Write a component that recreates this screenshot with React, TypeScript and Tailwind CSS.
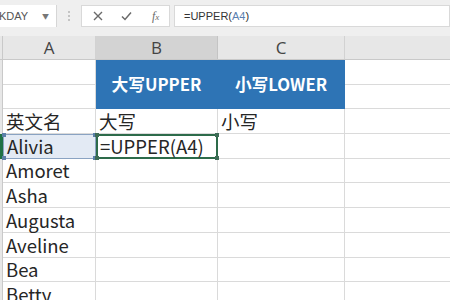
import React from 'react';

const font = { fontFamily: '"Noto Sans CJK SC", "Noto Sans", sans-serif' };

const names = ['Amoret', 'Asha', 'Augusta', 'Aveline', 'Bea', 'Betty'];

const Handle: React.FC<{ className: string; color: string }> = ({ className, color }) => (
  <span className={`absolute w-[4px] h-[4px] ${className}`} style={{ backgroundColor: color }} />
);

const App: React.FC = () => {
  return (
    <div className="w-[450px] h-[300px] overflow-hidden bg-white" style={font}>
      {/* Formula bar */}
      <div className="h-[36px] bg-[#efefef] pt-[5px] flex items-start">
        <div className="w-[57px] h-[22px] bg-white border-r border-[#d6d6d6] flex items-center justify-between pl-0 pr-[7px]">
          <span className="text-[11px] text-[#555] -ml-[1px]" style={{ fontFamily: '"Liberation Sans", sans-serif' }}>
            KDAY
          </span>
          <span className="text-[7px] text-[#777]">▼</span>
        </div>
        <div className="w-[24px] h-[22px] flex flex-col items-center justify-center gap-[2px]">
          <span className="w-[2px] h-[2px] bg-[#c4c4c4]" />
          <span className="w-[2px] h-[2px] bg-[#c4c4c4]" />
          <span className="w-[2px] h-[2px] bg-[#c4c4c4]" />
        </div>
        <div className="w-[89px] h-[22px] bg-white border border-[#d9d9d9] flex items-center text-[#6a6a6a]">
          <svg className="ml-[11px]" width="10" height="10" viewBox="0 0 10 10" fill="none" stroke="currentColor" strokeWidth="1.4">
            <path d="M1 1 9 9M9 1 1 9" />
          </svg>
          <svg className="ml-[18px]" width="11" height="10" viewBox="0 0 11 10" fill="none" stroke="currentColor" strokeWidth="1.5">
            <path d="M1 5.5 4 8.5 10 1.5" />
          </svg>
          <span className="ml-[20px] text-[12px] italic" style={{ fontFamily: '"Liberation Serif", serif' }}>
            f<span className="text-[9px]">x</span>
          </span>
        </div>
        <div className="ml-[4px] flex-1 h-[22px] bg-white border border-[#d9d9d9] flex items-center pl-[9px]">
          <span className="text-[11px] text-[#333]" style={{ fontFamily: '"Liberation Sans", sans-serif' }}>
            =UPPER(<span className="text-[#5a7fb0]">A4</span>)
          </span>
        </div>
      </div>

      {/* Column headers */}
      <div className="flex h-[24px] bg-[#e7e7e7] border-b border-[#c9c9c9] text-[17px] text-[#444]" style={{ fontFamily: '"Open Sans", sans-serif' }}>
        <div className="w-[3px] border-r border-[#c9c9c9]" />
        <div className="w-[93px] border-r border-[#d2d2d2] flex items-center justify-center">A</div>
        <div className="w-[122px] bg-[#d3d3d3] border-r border-[#c4c4c4] flex items-center justify-center">B</div>
        <div className="w-[127px] border-r border-[#d2d2d2] flex items-center justify-center">C</div>
        <div className="flex-1" />
      </div>

      {/* Grid */}
      <div className="grid grid-cols-[3px_93px_122px_127px_1fr] auto-rows-[24.7px] text-[18.5px] text-[#262626]">
        {/* rows 1-2 */}
        <div className="row-span-2 bg-[#e7e7e7] border-r border-[#c9c9c9]" />
        <div className="border-r border-b border-[#dadada]" />
        <div className="row-span-2 bg-[#2e74b5] border-r border-b border-[#2e74b5] flex items-center justify-center text-white font-bold text-[16.7px]">
          大写UPPER
        </div>
        <div className="row-span-2 bg-[#2e74b5] border-r border-b border-[#2e74b5] flex items-center justify-center text-white font-bold text-[16.7px]">
          小写LOWER
        </div>
        <div className="border-b border-[#dadada]" />
        <div className="border-r border-b border-[#dadada]" />
        <div className="border-b border-[#dadada]" />

        {/* row 3 */}
        <div className="bg-[#e7e7e7] border-r border-[#c9c9c9]" />
        <div className="border-r border-b border-[#dadada] flex items-end pl-[3px] leading-[23px]">英文名</div>
        <div className="border-r border-b border-[#dadada] flex items-end pl-[3px] leading-[23px]">大写</div>
        <div className="border-r border-b border-[#dadada] flex items-end pl-[3px] leading-[23px]">小写</div>
        <div className="border-b border-[#dadada]" />

        {/* row 4 */}
        <div className="bg-[#1e7145]" />
        <div className="relative bg-[#e3eaf4] border border-[#8aa3c2] flex items-end pl-[3px] leading-[23px]">
          Alivia
          <Handle className="-left-[2px] -top-[2px]" color="#5b7fa8" />
          <Handle className="-right-[2px] -top-[2px]" color="#5b7fa8" />
          <Handle className="-left-[2px] -bottom-[2px]" color="#5b7fa8" />
          <Handle className="-right-[2px] -bottom-[2px]" color="#5b7fa8" />
        </div>
        <div className="relative border-2 border-[#2d6b4a] flex items-end pl-[2px] leading-[22px]">
          =UPPER(A4)
          <Handle className="-left-[3px] -top-[3px]" color="#3e6b56" />
          <Handle className="-right-[3px] -top-[3px]" color="#3e6b56" />
          <Handle className="-left-[3px] -bottom-[3px]" color="#3e6b56" />
          <Handle className="-right-[3px] -bottom-[3px]" color="#3e6b56" />
        </div>
        <div className="border-r border-b border-[#dadada]" />
        <div className="border-b border-[#dadada]" />

        {names.map((n) => (
          <React.Fragment key={n}>
            <div className="bg-[#e7e7e7] border-r border-[#c9c9c9]" />
            <div className="border-r border-b border-[#dadada] flex items-end pl-[3px] leading-[23px]">{n}</div>
            <div className="border-r border-b border-[#dadada]" />
            <div className="border-r border-b border-[#dadada]" />
            <div className="border-b border-[#dadada]" />
          </React.Fragment>
        ))}
      </div>
    </div>
  );
};

export default App;
